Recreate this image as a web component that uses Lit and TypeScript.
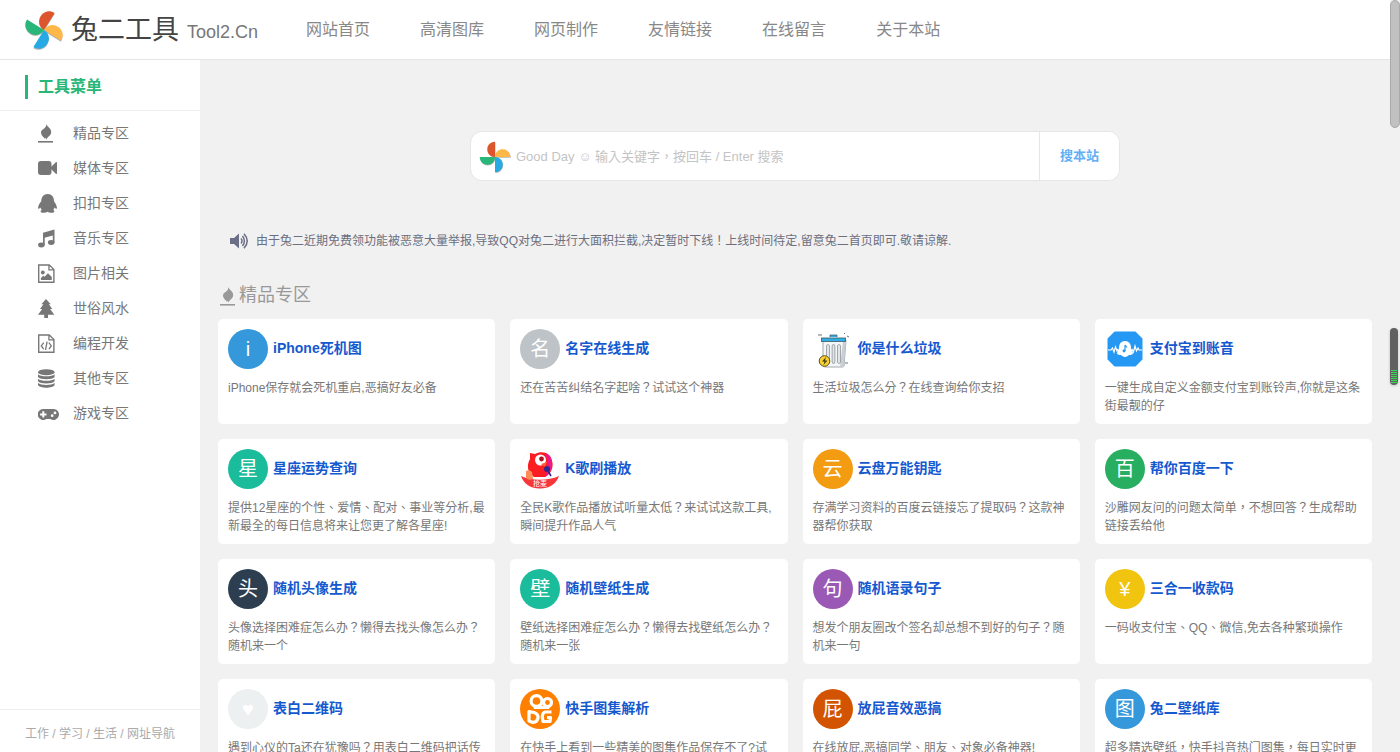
import { LitElement, html, css, svg, nothing } from "lit";
import { customElement, property } from "lit/decorators.js";
import { styleMap } from "lit/directives/style-map.js";

const flame = svg`<path d="M8.200 0C9.300 3 13.200 4 13.200 8C13.200 11.500 9.800 12.600 8 15.800C8.300 14 7.500 13.500 6.800 14.800C6.200 13.200 3 11.500 3 8.500C3 5 9 4.500 8.200 0Z"/><rect x="0" y="17" width="15" height="1.600"/>`;

const icons: Record<string, unknown> = {
  flame,
  video: svg`<rect x="0" y="2" width="13.500" height="14" rx="3"/><path d="M12.500 8.500L17.800 3.300Q19 2.600 19 4V14Q19 15.400 17.800 14.700L12.500 9.500Z"/>`,
  penguin: svg`<path d="M9.700 0C13.700 0 16 3 16 7.300C17 8.800 18.700 11 18.900 13.500C19 15.300 18 15.200 16.600 13.500C16.300 14.500 15.900 15.200 15.200 16C17 16.700 17 18.800 13.800 18.800C11.800 18.800 10.400 18.400 9.500 17.800C8.600 18.400 7.200 18.800 5.200 18.800C2 18.800 2 16.700 3.800 16C3.100 15.200 2.700 14.500 2.400 13.500C1 15.200 0 15.300 0.100 13.500C0.300 11 2 8.800 3.300 7.300C3.300 3 5.700 0 9.700 0Z"/>`,
  music: svg`<path d="M5 3.700L16.500 .5V13.500H14.800V6.500L6.700 8.700V16H5Z"/><ellipse cx="3.400" cy="16" rx="3.300" ry="2.400"/><ellipse cx="13.200" cy="13.500" rx="3.300" ry="2.400"/>`,
  image: svg`<path fill-rule="evenodd" d="M0 .3H11.500L16.600 5.300V19H0ZM1.400 1.700V17.600H15.200V6.600H10.300V1.700ZM11.600 2.200V5.300H14.800Z"/><circle cx="4.800" cy="8.500" r="1.900"/><path d="M2.900 16V14L5.300 11.700L6.500 12.800L10 9.300L13.800 13V16Z"/>`,
  tree: svg`<path d="M8 0L12.700 5.200H10.800L14.300 9.900H12.100L16.300 15.700H10V19H6.200V15.700H0L4.200 9.900H2L5.400 5.200H3.400Z"/>`,
  code: svg`<path fill-rule="evenodd" d="M0 .3H11.500L16.600 5.300V19H0ZM1.400 1.700V17.600H15.200V6.600H10.300V1.700ZM11.600 2.200V5.300H14.800Z"/><path d="M5.700 8.700L3.300 11.900L5.700 15.100M10.900 8.700L13.300 11.900L10.900 15.100M9.100 7.600L7.500 16" fill="none" stroke="currentColor" stroke-width="1.300"/>`,
  database: svg`<ellipse cx="8.300" cy="3.200" rx="8.300" ry="3"/><path d="M0 5.300C2.500 8 14.100 8 16.600 5.300V8C14.600 11 2 11 0 8ZM0 9.700C2.500 12.400 14.100 12.400 16.600 9.700V12.200C14.600 15.200 2 15.200 0 12.200ZM0 14C2.500 16.600 14.100 16.600 16.600 14V16C14.600 19.600 2 19.600 0 16Z"/>`,
  gamepad: svg`<path fill-rule="evenodd" d="M5.500 5H15.200A5.500 5.500 0 1 1 12.300 15H8.400A5.500 5.500 0 1 1 5.500 5ZM4.300 7.200V9.400H2.100V11.400H4.300V13.600H6.300V11.400H8.500V9.400H6.300V7.200ZM14.200 10.300A1.400 1.400 0 1 0 14.200 13.100A1.400 1.400 0 1 0 14.200 10.300ZM17 7.500A1.400 1.400 0 1 0 17 10.300A1.400 1.400 0 1 0 17 7.500Z"/>`,
};

const icon = (name: string) => html`<svg class="icon" viewBox="0 0 22 19" width="22" height="19" fill="currentColor" aria-hidden="true">${icons[name]}</svg>`;

const pinwheel = (size: number, angle: number) => html`
  <svg class="pinwheel" width=${size} height=${size} viewBox="-21 -21 42 42" aria-hidden="true">
    <g transform="rotate(${angle})">
      <g fill="#000" opacity=".3" transform="translate(.6 1)">
        <path d="M0 0V-20A10 10 0 0 0 0 0M0 0H20A10 10 0 0 0 0 0M0 0V20A10 10 0 0 0 0 0M0 0H-20A10 10 0 0 0 0 0"/>
      </g>
      <path fill="#dc552c" d="M0 0V-20C-13.500 -20 -13.500 0 0 0"/>
      <path fill="#ffb848" d="M0 0H20C20 -13.500 0 -13.500 0 0"/>
      <path fill="#27a9e3" d="M0 0V20C13.500 20 13.500 0 0 0"/>
      <path fill="#28b779" d="M0 0H-20C-20 13.500 0 13.500 0 0"/>
    </g>
  </svg>`;

const pictures: Record<string, unknown> = {
  bin: html`<svg width="40" height="40" viewBox="0 0 40 40" aria-hidden="true">
    <path d="M10 11H33L31 37Q31 38 29 38H12Q10 38 10 36Z" fill="#f4f6f8" stroke="#a3a9af" stroke-width="1"/>
    <path d="M30 12H33L31 37Q31 38 29 38H27Z" fill="#c9ced3"/>
    <path d="M15 17V33M20.500 17V33M26 17V33" stroke="#8d949b" stroke-width="3.600" stroke-linecap="round"/>
    <path d="M15 17V33M20.500 17V33M26 17V33" stroke="#e3e6e8" stroke-width="2" stroke-linecap="round"/>
    <path d="M17 8V6H24V8" fill="#31aee4" stroke="#49616d" stroke-width=".8"/>
    <rect x="8.500" y="9" width="24" height="3.500" fill="#31aee4" stroke="#3d5966" stroke-width=".8"/>
    <path d="M5 6H9M31 4L32 5M34 7L36 8M32 34H35" stroke="#6b747b" stroke-width="1"/>
    <circle cx="11.500" cy="32" r="5.300" fill="#fbd22d" stroke="#5b512b" stroke-width="1"/>
    <path d="M13 28L9 32.500H11.500L10.500 36L14.500 31.500H12Z" fill="#3f3a25"/>
  </svg>`,
  bell: html`<svg width="40" height="40" viewBox="0 0 40 40" aria-hidden="true">
    <path d="M10 3.500H30L36.500 10V30L30 36.500H10L3.500 30V10Z" fill="#2598f3" stroke="#2598f3" stroke-width="2" stroke-linejoin="round"/>
    <path d="M3 21H6L7.500 19L9 23L10.500 18L12 22L13 20M27 20L28.500 23L30 17L31.500 22L33 19L34 21H37" fill="none" stroke="#fff" stroke-width="1.200"/>
    <path d="M20 12C24 12 26 15 26 19L28 24Q28 26 24 26Q20 30 16 26Q12 26 12 24L14 19C14 15 16 12 20 12Z" fill="#fff"/>
    <path d="M20 16V22M20 16L22 18.500" fill="none" stroke="#2598f3" stroke-width="1.200"/><circle cx="19" cy="22" r="1.400" fill="#2598f3"/>
  </svg>`,
  karaoke: html`<svg width="40" height="40" viewBox="0 0 40 40" aria-hidden="true">
    <circle cx="20" cy="20" r="19.500" fill="#fff" stroke="#f3f3f3" stroke-width=".6"/>
    <path d="M10 4L15 5C22 1 31 4 32 12C34 18 31 25 25 28H14C8 24 6 17 10 10Z" fill="#fb1d22"/>
    <path d="M25 4C31 6 34 13 31 20C30 24 28 26 25 28C29 19 28 10 25 4Z" fill="#ef1688"/>
    <circle cx="20.500" cy="11" r="5.500" fill="#fff"/><circle cx="21.500" cy="10" r="2.400" fill="#a9151c"/>
    <path d="M21 15L27 13L25 18Z" fill="#ff5a33"/>
    <circle cx="27" cy="20" r="3" fill="#35268d"/><path d="M28 22L31 27" stroke="#35268d" stroke-width="1.600"/>
    <path d="M1 27C12 32 28 32 39 27C36.500 35 29 39.500 20 39.500C11 39.500 3.500 35 1 27Z" fill="#f6363a"/>
    <path d="M6 22Q9 20 12 23L13 30Q8 32 6 29Z" fill="#ff8b56"/>
    <text x="20" y="37" fill="#fff" font-size="7" text-anchor="middle">抢麦</text>
  </svg>`,
  kuaishou: html`<svg width="40" height="40" viewBox="0 0 40 40" aria-hidden="true">
    <circle cx="20" cy="20" r="20" fill="#ff8000"/>
    <g fill="none" stroke="#fff" stroke-width="3.200" stroke-linejoin="round">
      <circle cx="16.500" cy="12" r="5.400"/><circle cx="27.500" cy="13.500" r="4"/>
      <path d="M9 22.500L14 23.500Q18.500 25 18 29Q17 33 13 33.500L9 32Z"/>
      <path d="M31.500 23H25Q22.500 23.500 22.300 28L23 32.500H30L30.500 28.500H27"/>
    </g>
    <path d="M13 17H30L29 20H14Z" fill="#fff"/>
  </svg>`,
};

interface Tool { title: string; text: string; mark?: string; color?: string; picture?: string; }

const tools: Tool[] = [
  { mark: "i", color: "#3498db", title: "iPhone死机图", text: "iPhone保存就会死机重启,恶搞好友必备" },
  { mark: "名", color: "#bdc3c7", title: "名字在线生成", text: "还在苦苦纠结名字起啥？试试这个神器" },
  { picture: "bin", title: "你是什么垃圾", text: "生活垃圾怎么分？在线查询给你支招" },
  { picture: "bell", title: "支付宝到账音", text: "一键生成自定义金额支付宝到账铃声,你就是这条街最靓的仔" },
  { mark: "星", color: "#1abc9c", title: "星座运势查询", text: "提供12星座的个性、爱情、配对、事业等分析,最新最全的每日信息将来让您更了解各星座!" },
  { picture: "karaoke", title: "K歌刷播放", text: "全民K歌作品播放试听量太低？来试试这款工具,瞬间提升作品人气" },
  { mark: "云", color: "#f39c12", title: "云盘万能钥匙", text: "存满学习资料的百度云链接忘了提取码？这款神器帮你获取" },
  { mark: "百", color: "#27ae60", title: "帮你百度一下", text: "沙雕网友问的问题太简单，不想回答？生成帮助链接丢给他" },
  { mark: "头", color: "#2c3e50", title: "随机头像生成", text: "头像选择困难症怎么办？懒得去找头像怎么办？随机来一个" },
  { mark: "壁", color: "#1abc9c", title: "随机壁纸生成", text: "壁纸选择困难症怎么办？懒得去找壁纸怎么办？随机来一张" },
  { mark: "句", color: "#9b59b6", title: "随机语录句子", text: "想发个朋友圈改个签名却总想不到好的句子？随机来一句" },
  { mark: "¥", color: "#f1c40f", title: "三合一收款码", text: "一码收支付宝、QQ、微信,免去各种繁琐操作" },
  { mark: "♥", color: "#ecf0f1", title: "表白二维码", text: "遇到心仪的Ta还在犹豫吗？用表白二维码把话传" },
  { picture: "kuaishou", title: "快手图集解析", text: "在快手上看到一些精美的图集作品保存不了?试" },
  { mark: "屁", color: "#d35400", title: "放屁音效恶搞", text: "在线放屁,恶搞同学、朋友、对象必备神器!" },
  { mark: "图", color: "#3498db", title: "兔二壁纸库", text: "超多精选壁纸，快手抖音热门图集，每日实时更" },
];

const links = ["网站首页", "高清图库", "网页制作", "友情链接", "在线留言", "关于本站"];

const menu = [
  ["flame", "精品专区"], ["video", "媒体专区"], ["penguin", "扣扣专区"],
  ["music", "音乐专区"], ["image", "图片相关"], ["tree", "世俗风水"],
  ["code", "编程开发"], ["database", "其他专区"], ["gamepad", "游戏专区"],
];

@customElement("tool-card")
class ToolCard extends LitElement {
  @property({ attribute: false }) tool!: Tool;

  static styles = css`
    :host { display: block; min-width: 0; }
    .card { display: block; height: 100%; box-sizing: border-box; padding: 10px 10px 9px; border-radius: 5px; background: #fff; color: #777; text-decoration: none; }
    .head { display: flex; align-items: center; gap: 5px; }
    .mark, .picture { flex: none; width: 40px; height: 40px; }
    .mark { display: grid; place-items: center; border-radius: 50%; color: #fff; font-size: 20px; line-height: 40px; }
    .picture svg { display: block; }
    .title { margin: 0 0 2px; font-size: 14px; line-height: 20px; font-weight: 700; color: #1559cf; }
    .text { margin: 10px 0 0; min-height: 36px; font-family: "Liberation Sans", "Noto Sans CJK TC", sans-serif; font-size: 12px; line-height: 18px; }
  `;

  render() {
    const { title, text, mark, color, picture } = this.tool;
    return html`<a class="card" href="#">
      <div class="head">
        ${mark ? html`<span class="mark" style=${styleMap({ background: color ?? "" })}>${mark}</span>` : nothing}
        ${picture ? html`<span class="picture">${pictures[picture]}</span>` : nothing}
        <h3 class="title">${title}</h3>
      </div>
      <p class="text">${text}</p>
    </a>`;
  }
}

@customElement("app-root")
class AppRoot extends LitElement {
  static styles = css`
    :host { display: grid; position: relative; grid-template: auto minmax(0, 1fr) / 200px minmax(0, 1fr); height: 100vh; padding-right: 10px; box-sizing: border-box; overflow: hidden; background: #f1f1f1; color: #777; font-family: "Liberation Sans", "Noto Sans CJK SC", sans-serif; font-size: 14px; }
    a { color: inherit; text-decoration: none; }
    ul { list-style: none; margin: 0; padding: 0; }
    svg { display: block; flex: none; }

    .header { grid-column: 1 / -1; display: flex; align-items: center; gap: 48px; height: 59px; padding-left: 23px; background: #fff; border-bottom: 1px solid #e6e6e6; }
    .brand { display: flex; align-items: center; gap: 6px; white-space: nowrap; }
    .name { font-size: 27px; line-height: 40px; color: #444; }
    .domain { padding: 4px 0 0 2px; font-size: 18px; line-height: 24px; color: #777; }
    .links { display: flex; gap: 50px; font-size: 16px; line-height: 24px; color: #888; white-space: nowrap; }

    .side { display: flex; flex-direction: column; background: #fff; }
    .side-head { padding: 15px 25px 11px; border-bottom: 1px solid #eee; }
    .side-title { margin: 0; padding-left: 10px; border-left: 3px solid #28b779; color: #28b779; font-size: 16px; line-height: 24px; font-weight: 700; }
    .menu { flex: 1; padding-top: 5px; }
    .item { display: flex; align-items: center; gap: 13px; height: 35px; padding-left: 38px; }
    .item span { padding-bottom: 2px; line-height: 20px; }
    .side-foot { padding: 12px 25px 6px; border-top: 1px solid #eee; font-size: 12px; line-height: 24px; color: #aaa; white-space: nowrap; }

    .main { padding: 71px 18px 0; overflow: hidden; }
    .search { display: flex; box-sizing: border-box; max-width: 650px; height: 50px; margin: 0 auto; border: 1px solid #e6e6e6; border-radius: 12px; background: #fff; overflow: hidden; }
    .search-label { display: flex; align-items: center; padding: 2px 5px 0 8px; }
    .search-input { flex: 1; min-width: 0; padding: 2px 0 0; border: 0; outline: 0; background: none; color: #666; font: 13px/20px "Liberation Sans", "Noto Sans CJK TC", sans-serif; }
    .search-input::placeholder { color: #c4c4c4; opacity: 1; }
    .search-button { width: 80px; padding: 0; border: 0; border-left: 1px solid #e6e6e6; background: #fff; color: #62aff5; font: 700 13px/20px "Liberation Sans", "Noto Sans CJK SC", sans-serif; }
    .notice { display: flex; align-items: center; gap: 7px; margin: 50px 12px 0; font-family: "Liberation Sans", "Noto Sans CJK TC", sans-serif; font-size: 12px; line-height: 20px; color: #6b6f7f; }
    .section { display: flex; align-items: center; gap: 3px; margin: 29px 2px 9px; font-size: 18px; line-height: 30px; font-weight: 400; color: #999; }
    .section .icon { width: 16px; margin-top: 2px; }
    .grid { display: grid; grid-template-columns: repeat(4, minmax(0, 1fr)); gap: 15px; }

    .scroll { position: absolute; top: 0; right: 0; width: 10px; height: 128px; box-sizing: border-box; border: 1px solid #aaa; border-radius: 5px; background: #c1c1c1; }
    .gauge { position: absolute; top: 328px; right: 2px; width: 8px; height: 57px; box-sizing: border-box; padding: 0 1px 2px; border-radius: 4px; background: #606060; box-shadow: 0 1px 3px #0003; display: flex; flex-direction: column; justify-content: flex-end; gap: 1px; }
    .gauge i { height: 1px; background: #36d854; }
  `;

  render() {
    return html`
      <header class="header">
        <a class="brand" href="#">
          ${pinwheel(42, 32)}
          <span class="name">兔二工具</span>
          <span class="domain">Tool2.Cn</span>
        </a>
        <nav class="links">${links.map((l) => html`<a href="#">${l}</a>`)}</nav>
      </header>
      <aside class="side">
        <div class="side-head"><h2 class="side-title">工具菜单</h2></div>
        <ul class="menu">${menu.map(([name, label]) => html`<li><a class="item" href="#">${icon(name)}<span>${label}</span></a></li>`)}</ul>
        <div class="side-foot">工作 / 学习 / 生活 / 网址导航</div>
      </aside>
      <main class="main">
        <form class="search" @submit=${(e: Event) => e.preventDefault()}>
          <label class="search-label" for="query">${pinwheel(32, 0)}</label>
          <input class="search-input" id="query" type="text" placeholder="Good Day ☺ 输入关键字，按回车 / Enter 搜索">
          <button class="search-button" type="submit">搜本站</button>
        </form>
        <div class="notice">
          <svg width="19" height="16" viewBox="0 0 19 16" aria-hidden="true">
            <path d="M0 5H4L9 .5V15.500L4 11H0Z" fill="#6b6f86"/>
            <path d="M11 5.500Q13 8 11 10.500M12.500 3Q16.300 8 12.500 13M14 .7Q20.500 8 14 15.300" fill="none" stroke="#6b6f86" stroke-width="1.500"/>
          </svg>
          <span>由于兔二近期免费领功能被恶意大量举报,导致QQ对兔二进行大面积拦截,决定暂时下线！上线时间待定,留意兔二首页即可.敬请谅解.</span>
        </div>
        <h2 class="section"><svg class="icon" viewBox="0 0 16 19" height="19" fill="currentColor" aria-hidden="true">${flame}</svg>精品专区</h2>
        <div class="grid">${tools.map((t) => html`<tool-card .tool=${t}></tool-card>`)}</div>
      </main>
      <div class="scroll"></div>
      <div class="gauge">${Array.from({ length: 7 }, () => html`<i></i>`)}</div>
    `;
  }
}
